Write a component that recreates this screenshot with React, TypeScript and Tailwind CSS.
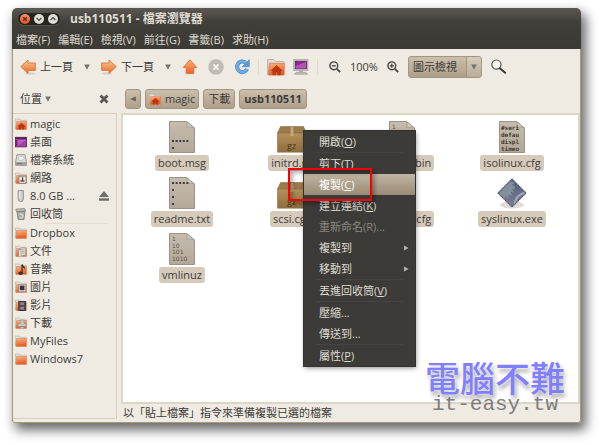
import React from "react"

type IconProps = { className?: string }

const CaretDown: React.FC = () => (
  <svg width="6" height="6" viewBox="0 0 6 6" aria-hidden="true">
    <path d="M0.2 0.5h5.6L3 5.8z" fill="#77736a" />
  </svg>
)

const CaretLeft: React.FC = () => (
  <svg width="6" height="6" viewBox="0 0 6 6" aria-hidden="true">
    <path d="M5.8 0.4v5.2L0.2 3z" fill="#6b6353" />
  </svg>
)

const BackIcon: React.FC = () => (
  <svg width="16" height="16" viewBox="0 0 16 16" aria-hidden="true">
    <defs>
      <linearGradient id="back" x1="0" y1="0" x2="0" y2="1">
        <stop offset="0" stopColor="#fbcb9c" />
        <stop offset="1" stopColor="#ea6a22" />
      </linearGradient>
    </defs>
    <ellipse cx="10" cy="14.4" rx="5" ry="1.2" fill="#d8d2c6" />
    <path d="M0.8 7.6 8 1v3h7.3v7.4H8v3z" fill="url(#back)" stroke="#d8703a" strokeWidth="0.9" strokeLinejoin="round" />
  </svg>
)

const ForwardIcon: React.FC = () => (
  <svg width="16" height="16" viewBox="0 0 16 16" aria-hidden="true">
    <ellipse cx="6" cy="14.4" rx="5" ry="1.2" fill="#d8d2c6" />
    <path d="M15.2 7.6 8 1v3H0.7v7.4H8v3z" fill="url(#back)" stroke="#d8703a" strokeWidth="0.9" strokeLinejoin="round" />
  </svg>
)

const UpIcon: React.FC = () => (
  <svg width="16" height="16" viewBox="0 0 16 16" aria-hidden="true">
    <defs>
      <linearGradient id="up" x1="0" y1="0" x2="0" y2="1">
        <stop offset="0" stopColor="#fbb57b" />
        <stop offset="1" stopColor="#ec5f20" />
      </linearGradient>
    </defs>
    <path d="M8 0.8 14.8 8.6h-3v6H4.2v-6h-3z" fill="url(#up)" stroke="#d8703a" strokeWidth="0.9" strokeLinejoin="round" />
  </svg>
)

const StopIcon: React.FC = () => (
  <svg width="16" height="16" viewBox="0 0 16 16" aria-hidden="true">
    <circle cx="8" cy="8" r="7.7" fill="#bfbcb6" />
    <path d="M5.4 5.4l5.2 5.2M10.6 5.4l-5.2 5.2" stroke="#f6f4f0" strokeWidth="1.8" />
  </svg>
)

const ReloadIcon: React.FC = () => (
  <svg width="16" height="16" viewBox="0 0 16 16" aria-hidden="true">
    <path d="M11.6 3.6A5.3 5.3 0 1 0 13.2 10" fill="none" stroke="#4f8cca" strokeWidth="4" />
    <path d="M11.6 3.6A5.3 5.3 0 1 0 13.2 10" fill="none" stroke="#70abe2" strokeWidth="2.6" />
    <path d="M15.3 0.6v7.2H8.2z" fill="#5b97d4" stroke="#4a86c6" strokeWidth="0.6" />
  </svg>
)

type FolderKind = "plain" | "home" | "network" | "documents" | "music" | "pictures" | "videos" | "downloads"

const emblems: Record<FolderKind, React.ReactNode> = {
  plain: null,
  home: (
    <path d="M6.4 5 2.8 8.3h1.1v2.9h1.8V9.4h1.5v1.8h1.8V8.3h1.100z" fill="#bb3611" stroke="#a83412" strokeWidth="0.4" />
  ),
  network: (
    <g>
      <rect x="4" y="4.2" width="7" height="7" fill="#ece9e4" stroke="#77736c" strokeWidth="0.7" />
      <path d="M7.5 5.3v3M5.5 9h4" stroke="#55524d" strokeWidth="1.4" />
    </g>
  ),
  documents: (
    <g fill="#e6e3dd" stroke="#8a867e" strokeWidth="0.6">
      <path d="M3.6 4.6h4v7.2h-4z" />
      <path d="M6 2.8h4.6v7.6H6z" />
      <path d="M7 4.8h2.6M7 6.4h2.6M7 8h2.6" />
    </g>
  ),
  music: (
    <g fill="#37352f">
      <path d="M6.4 1.4l1.3-.2c.2 2 3.5 2.6 2.3 5.8-.2-1.6-1-2.2-2.3-2.5v5.7H6.4z" />
      <ellipse cx="5.6" cy="10.2" rx="2.2" ry="1.7" />
    </g>
  ),
  pictures: (
    <g>
      <rect x="3.6" y="3.4" width="7" height="7.4" fill="#dcd9d4" stroke="#7e7a73" strokeWidth="0.5" />
      <rect x="4.8" y="4.6" width="4.6" height="4.6" fill="#3a3048" />
    </g>
  ),
  videos: (
    <g>
      <rect x="3.2" y="2" width="7.8" height="10" fill="#37312f" />
      <path d="M5.2 3.2h3.8v3H5.2zM5.2 7.4h3.8v3.4H5.2z" fill="#9d7ca4" />
      <path d="M4.2 2.6v9M10 2.6v9" stroke="#b9b3ad" strokeWidth="0.7" strokeDasharray="1 1" />
    </g>
  ),
  downloads: (
    <path d="M5.2 3h3.8v3.4h2.2v3.4H3V6.4h2.2zM3.6 9.6l3.5 2.8 3.5-2.8z" fill="#c9c6c0" stroke="#85817a" strokeWidth="0.5" />
  ),
}

const FolderIcon: React.FC<IconProps & { kind: FolderKind }> = ({ kind, className = "size-3" }) => (
  <svg className={`shrink-0 ${className}`} viewBox="0 0 12 12" aria-hidden="true">
    <defs>
      <linearGradient id="folder" x1="0" y1="0" x2="0.2" y2="1">
        <stop offset="0" stopColor="#f9b482" />
        <stop offset="1" stopColor="#e85a22" />
      </linearGradient>
    </defs>
    <path d="M0.4 11.200V1h4.200l1 1.300h5.700v2H2z" fill="#e2ded7" stroke="#b5afa5" strokeWidth="0.6" />
    <path d="M1.600 3.500h10l-.2 7.900H1z" fill="url(#folder)" stroke="#d57a50" strokeWidth="0.5" />
    {emblems[kind]}
  </svg>
)

const DesktopIcon: React.FC = () => (
  <svg className="size-3 shrink-0" viewBox="0 0 12 12" aria-hidden="true">
    <rect x="0.4" y="1.3" width="11.2" height="9.6" fill="#a63bab" stroke="#5a2454" strokeWidth="0.8" />
    <path d="M0.6 2.2h10.8" stroke="#3b2438" strokeWidth="1.3" />
    <path d="M1.4 4v6" stroke="#5f2361" strokeWidth="1.4" strokeDasharray="1.2 0.8" />
    <path d="M3 9.8V4h8z" fill="#cd6fce" opacity="0.6" />
  </svg>
)

const DriveIcon: React.FC = () => (
  <svg className="size-3 shrink-0" viewBox="0 0 12 12" aria-hidden="true">
    <path d="M2 0.6h8l1.4 7.2v3.6H0.6V7.8z" fill="#dedddb" stroke="#8b8985" strokeWidth="0.8" />
    <ellipse cx="6" cy="4.2" rx="3" ry="2.2" fill="#f4f3f2" stroke="#aaa8a5" strokeWidth="0.6" />
    <path d="M0.8 8h10.4v3.2H0.8z" fill="#a19f9b" />
    <path d="M2 9.6h5" stroke="#6a6865" strokeWidth="0.8" />
  </svg>
)

const UsbIcon: React.FC = () => (
  <svg className="size-3 shrink-0" viewBox="0 0 12 12" aria-hidden="true">
    <path d="M3.2 0.6h5.2v8.2q0 2.800-2.600 2.800T3.200 8.800z" fill="#cfcdca" stroke="#85837f" strokeWidth="0.8" />
    <path d="M4.8 1.6v7" stroke="#f3f2f0" strokeWidth="1.2" />
  </svg>
)

const TrashIcon: React.FC = () => (
  <svg className="size-3 shrink-0" viewBox="0 0 12 12" aria-hidden="true">
    <path d="M2 3.4h8l-1 8.1H3.2z" fill="#aaa9a5" stroke="#6e6c68" strokeWidth="0.7" />
    <path d="M0.8 1.2 9.6 0.6l1 2.2-9 .8z" fill="#c9c8c5" stroke="#6e6c68" strokeWidth="0.7" />
    <path d="M4.4 6.2h3l.8 2-1.4 1.8H4.6" fill="none" stroke="#f2f1ef" strokeWidth="0.9" />
  </svg>
)

const EjectIcon: React.FC = () => (
  <svg width="10" height="10" viewBox="0 0 10 10" aria-hidden="true">
    <path d="M5 0 10 6H0zM0 7.3h10v2.5H0z" fill="#716e68" />
  </svg>
)

const ComputerIcon: React.FC = () => (
  <svg width="16" height="16" viewBox="0 0 16 16" aria-hidden="true">
    <rect x="0.8" y="0.8" width="14" height="10.4" fill="#dcdad7" stroke="#98958f" strokeWidth="0.8" />
    <rect x="2.2" y="2.2" width="11.2" height="7.6" fill="#8e2a92" stroke="#4f1b52" strokeWidth="0.7" />
    <path d="M2.6 9.4V7l10.4-4v6.4z" fill="#c464c6" opacity="0.7" />
    <path d="M6 11.4h4v1.800H6z" fill="#b0ada8" />
    <path d="M3 13.400h10l1.500 1.800h-13z" fill="#c9c6c1" stroke="#8e8b85" strokeWidth="0.6" />
  </svg>
)

const ZoomIcon: React.FC<{ sign: "in" | "out" }> = ({ sign }) => (
  <svg width="12" height="12" viewBox="0 0 12 12" fill="none" stroke="#45433e" aria-hidden="true">
    <circle cx="4.8" cy="4.8" r="3.9" strokeWidth="1.4" />
    <path d="M2.8 4.8h4" strokeWidth="1.3" />
    {sign === "in" && <path d="M4.8 2.8v4" strokeWidth="1.3" />}
    <path d="M7.8 7.8l3.4 3.4" strokeWidth="1.8" />
  </svg>
)

const SearchIcon: React.FC = () => (
  <svg width="16" height="16" viewBox="0 0 16 16" fill="none" aria-hidden="true">
    <circle cx="5.4" cy="5.6" r="4.6" fill="#f6f4f0" stroke="#55534d" strokeWidth="1.2" />
    <path d="M8.8 9.200l5.400 4.600" stroke="#3a3935" strokeWidth="2" strokeLinecap="round" />
  </svg>
)

type FileKind = "text" | "dots" | "binary" | "config" | "package" | "exe"

const DocumentIcon: React.FC<{ children?: React.ReactNode }> = ({ children }) => (
  <svg width="26" height="32" viewBox="0 0 26 32" aria-hidden="true">
    <defs>
      <linearGradient id="paper" x1="0" y1="0" x2="0" y2="1">
        <stop offset="0" stopColor="#c6bcae" />
        <stop offset="1" stopColor="#b3a898" />
      </linearGradient>
    </defs>
    <path d="M0.5 0.5h17l8 6.600v24.400h-25z" fill="url(#paper)" stroke="#9b9285" />
    <path d="M17.500 0.500c1 2.400.8 4 .2 5.600 2.400-.4 5.400-.2 7.800 1z" fill="#d6cec3" stroke="#9b9285" strokeWidth="0.8" />
    {children}
  </svg>
)

const FileIcon: React.FC<{ kind: FileKind }> = ({ kind }) => {
  if (kind === "package") {
    return (
      <svg width="30" height="27" viewBox="0 0 30 27" aria-hidden="true">
        <defs>
          <linearGradient id="box" x1="0" y1="0" x2="0" y2="1">
            <stop offset="0" stopColor="#b59059" />
            <stop offset="1" stopColor="#8f6d3f" />
          </linearGradient>
        </defs>
        <path d="M3.500 0.500h23l3 6.500H0.500z" fill="#9c7a4a" stroke="#8b6d43" strokeWidth="0.6" />
        <path d="M0.500 7h29v19.200h-29z" fill="url(#box)" stroke="#8b6d43" strokeWidth="0.6" />
        <path d="M13.700 1h2.600l.2 9h-3z" fill="#c2a981" />
        <text x="10" y="23" fontSize="9" fontFamily="Open Sans, sans-serif" fill="#4a3619">
          gz
        </text>
      </svg>
    )
  }

  if (kind === "exe") {
    return (
      <svg width="32" height="32" viewBox="0 0 32 32" aria-hidden="true">
        <defs>
          <linearGradient id="gem" x1="0" y1="0" x2="0" y2="1">
            <stop offset="0" stopColor="#48597a" />
            <stop offset="1" stopColor="#85839a" />
          </linearGradient>
          <clipPath id="gem-edge">
            <path d="M16 2 30 16 16 30 2 16z" />
          </clipPath>
        </defs>
        <ellipse cx="16" cy="28" rx="12" ry="3.400" fill="#dddbd8" />
        <g clipPath="url(#gem-edge)">
          <path d="M0 0h32v32H0z" fill="url(#gem)" />
          <circle cx="7" cy="10" r="10" fill="#848f9b" />
          <circle cx="7" cy="10" r="10.600" fill="none" stroke="#848f9b" strokeWidth="2" strokeDasharray="2 1.600" />
          <circle cx="30" cy="27" r="11" fill="#77798f" stroke="#a3a9b8" strokeWidth="1.800" />
        </g>
        <path d="M16 2 30 16 16 30 2 16z" fill="none" stroke="#565a68" strokeWidth="1.200" strokeDasharray="1.500 0.500" />
      </svg>
    )
  }

  return (
    <DocumentIcon>
      {kind === "dots" && (
        <path d="M3 20h17M3 27h3" stroke="#3f3a45" strokeWidth="2" strokeDasharray="2 1.600" />
      )}
      {kind === "text" && (
        <path d="M3 6h17M3 13h3M3 20h3M3 27h3" stroke="#3f3a45" strokeWidth="2" strokeDasharray="2 1.600" />
      )}
      {kind === "binary" && (
        <g fontSize="6" fontFamily="DejaVu Sans, sans-serif" fill="#5d564c">
          <text x="3" y="8">1</text>
          <text x="3" y="15">10</text>
          <text x="3" y="21">101</text>
          <text x="3" y="28">1010</text>
        </g>
      )}
      {kind === "config" && (
        <g fontSize="6" fontWeight="700" fontFamily="DejaVu Sans Mono, monospace" fill="#3f3a33">
          <text x="2" y="9">#seri</text>
          <text x="2" y="16">defau</text>
          <text x="2" y="23">displ</text>
          <text x="2" y="30">timeo</text>
        </g>
      )}
    </DocumentIcon>
  )
}

const menus = ["檔案(F)", "編輯(E)", "檢視(V)", "前往(G)", "書籤(B)", "求助(H)"]

const devices = [
  { name: "magic", icon: <FolderIcon kind="home" /> },
  { name: "桌面", icon: <DesktopIcon /> },
  { name: "檔案系統", icon: <DriveIcon /> },
  { name: "網路", icon: <FolderIcon kind="network" /> },
  { name: "8.0 GB ...", icon: <UsbIcon />, ejectable: true },
  { name: "回收筒", icon: <TrashIcon /> },
]

const bookmarks: { name: string; kind: FolderKind }[] = [
  { name: "Dropbox", kind: "plain" },
  { name: "文件", kind: "documents" },
  { name: "音樂", kind: "music" },
  { name: "圖片", kind: "pictures" },
  { name: "影片", kind: "videos" },
  { name: "下載", kind: "downloads" },
  { name: "MyFiles", kind: "plain" },
  { name: "Windows7", kind: "plain" },
]

const files: { name: string; kind: FileKind }[] = [
  { name: "boot.msg", kind: "dots" },
  { name: "initrd.gz", kind: "package" },
  { name: "isolinux.bin", kind: "binary" },
  { name: "isolinux.cfg", kind: "config" },
  { name: "readme.txt", kind: "text" },
  { name: "scsi.cgz", kind: "package" },
  { name: "syslinux.cfg", kind: "config" },
  { name: "syslinux.exe", kind: "exe" },
  { name: "vmlinuz", kind: "binary" },
]

type Action = {
  label: string
  accel?: string
  tail?: string
  submenu?: boolean
  disabled?: boolean
  active?: boolean
  divided?: boolean
}

const actions: Action[] = [
  { label: "開啟", accel: "O" },
  { label: "剪下", accel: "T", divided: true },
  { label: "複製", accel: "C", active: true },
  { label: "建立連結", accel: "K" },
  { label: "重新命名", accel: "R", tail: "...", disabled: true },
  { label: "複製到", submenu: true },
  { label: "移動到", submenu: true },
  { label: "丟進回收筒", accel: "V", divided: true },
  { label: "壓縮", tail: "...", divided: true },
  { label: "傳送到", tail: "..." },
  { label: "屬性", accel: "P", divided: true },
]

const crumb =
  "flex h-5 items-center gap-1 rounded-[3px] border border-[#a39681] bg-gradient-to-b from-[#cbbfae] to-[#ad9f8a]"

const TitleBar: React.FC = () => (
  <header className="rounded-t-[5px] bg-gradient-to-b from-[#5b5952] via-[#403e39] via-35% to-[#3b3a35] text-[#dfdbd2]">
    <div className="flex h-[22px] items-center gap-2.5 pl-[6px]">
      <div className="flex h-3 items-center gap-1 rounded-full bg-[#25241f] px-0.5 shadow-[0_1px_0_#55534c]">
        <button aria-label="關閉" className="size-2.5 rounded-full bg-gradient-to-b from-[#f5926a] to-[#df5020]">
          <svg viewBox="0 0 10 10" className="size-2.5">
            <path d="M3.200 3.200l3.600 3.600M6.800 3.200L3.200 6.800" stroke="#6b2510" strokeWidth="1.300" />
          </svg>
        </button>
        <button aria-label="最小化" className="size-2.5 rounded-full bg-[#dfdcd6]">
          <svg viewBox="0 0 10 10" className="size-2.5">
            <path d="M2.600 4l2.400 2.400L7.400 4" fill="none" stroke="#4c4a44" strokeWidth="1.200" />
          </svg>
        </button>
        <button aria-label="最大化" className="size-2.5 rounded-full bg-[#dfdcd6]">
          <svg viewBox="0 0 10 10" className="size-2.5">
            <path d="M2.600 6l2.400-2.400L7.400 6" fill="none" stroke="#4c4a44" strokeWidth="1.200" />
          </svg>
        </button>
      </div>
      <h1 className="text-xs font-bold">usb110511 - 檔案瀏覽器</h1>
    </div>
    <nav className="flex h-[19px] items-center gap-2 pl-1">
      {menus.map((menu) => (
        <button key={menu} className="leading-4">
          {menu}
        </button>
      ))}
    </nav>
  </header>
)

const Toolbar: React.FC = () => (
  <div className="flex h-9 shrink-0 items-center pl-[7px]">
    <button className="flex items-center gap-1">
      <BackIcon />
      上一頁
    </button>
    <button aria-label="上一頁紀錄" className="mx-[11px]">
      <CaretDown />
    </button>
    <button className="flex items-center gap-1">
      <ForwardIcon />
      下一頁
    </button>
    <button aria-label="下一頁紀錄" className="mx-[11px]">
      <CaretDown />
    </button>
    <div className="flex gap-2.5">
      <button aria-label="上層">
        <UpIcon />
      </button>
      <button aria-label="停止" disabled>
        <StopIcon />
      </button>
      <button aria-label="重新載入">
        <ReloadIcon />
      </button>
    </div>
    <div className="ml-2 flex h-4 items-center gap-2 border-x border-[#e0dbd0] px-2">
      <button aria-label="家目錄">
        <FolderIcon kind="home" className="size-[18px]" />
      </button>
      <button aria-label="電腦">
        <ComputerIcon />
      </button>
    </div>
    <div className="ml-[11px] flex items-center gap-[9px]">
      <button aria-label="縮小">
        <ZoomIcon sign="out" />
      </button>
      <span>100%</span>
      <button aria-label="放大">
        <ZoomIcon sign="in" />
      </button>
      <div className="relative">
        <select
          aria-label="檢視模式"
          className="h-[22px] w-[74px] appearance-none rounded-[3px] border border-[#a39681] bg-gradient-to-b from-[#cbbfae] to-[#ad9f8a] pl-1"
        >
          <option>圖示檢視</option>
          <option>清單檢視</option>
        </select>
        <span className="pointer-events-none absolute inset-y-px right-px flex w-[15px] items-center justify-center rounded-r-[2px] border-l border-[#a39681] bg-gradient-to-b from-[#d5cbbc] to-[#b9ac98]">
          <CaretDown />
        </span>
      </div>
      <button aria-label="搜尋">
        <SearchIcon />
      </button>
    </div>
  </div>
)

const Sidebar: React.FC = () => (
  <aside className="flex w-[104px] shrink-0 flex-col pb-[3px]">
    <div className="flex h-7 items-center justify-between pr-2 pl-[7px]">
      <button className="flex items-center gap-[3px]">
        位置
        <CaretDown />
      </button>
      <button aria-label="關閉側邊欄">
        <svg width="10" height="10" viewBox="0 0 10 10">
          <path d="M1.500 1.500l7 7M8.500 1.500l-7 7" stroke="#5c5952" strokeWidth="2.800" />
        </svg>
      </button>
    </div>
    <div className="flex-1 border border-l-0 border-[#d8ceb9] pt-px">
      <ul>
        {devices.map(({ name, icon, ejectable }) => (
          <li key={name} className="flex h-[18px] items-center justify-between pr-[7px] pl-0.5">
            <a href="#" className="flex items-center gap-[3px]">
              {icon}
              {name}
            </a>
            {ejectable && (
              <button aria-label="退出">
                <EjectIcon />
              </button>
            )}
          </li>
        ))}
      </ul>
      <hr className="mr-2 ml-8 border-[#e2dccf]" />
      <ul>
        {bookmarks.map(({ name, kind }) => (
          <li key={name} className="flex h-[18px] items-center pl-0.5">
            <a href="#" className="flex items-center gap-[3px]">
              <FolderIcon kind={kind} />
              {name}
            </a>
          </li>
        ))}
      </ul>
    </div>
  </aside>
)

const ContextMenu: React.FC = () => (
  <div
    role="menu"
    className="absolute top-[131px] left-[304px] w-[111px] bg-[#3c3b37] text-[#dfdbd2] shadow-[1px_2px_5px_rgba(0,0,0,0.45)] ring-1 ring-[#33322e]"
  >
    {actions.map(({ label, accel, tail, submenu, disabled, active, divided }) => (
      <React.Fragment key={label}>
        {divided && <hr className="mx-3 border-[#454440]" />}
        <button
          role="menuitem"
          disabled={disabled}
          className={`flex h-[21px] w-full items-center justify-between pr-1.5 pl-[15px] disabled:text-[#8b8880] ${
            active ? "bg-gradient-to-b from-[#c2b5a3] to-[#998b75] text-white" : ""
          }`}
        >
          <span>
            {label}
            {accel && (disabled ? `(${accel})` : <>(<u>{accel}</u>)</>)}
            {tail}
          </span>
          {submenu && (
            <svg width="5" height="6" viewBox="0 0 5 6" aria-hidden="true">
              <path d="M0 0.500v5L4.600 3z" fill="#b5b1a7" />
            </svg>
          )}
        </button>
      </React.Fragment>
    ))}
  </div>
)

const App: React.FC = () => {
  return (
    <div className="relative flex min-h-screen flex-col bg-white pt-2 pr-[19px] pb-[22px] pl-3 font-['Open_Sans','Noto_Sans_CJK_TC',sans-serif] text-[11px] leading-4 text-[#3c3b37]">
      <main className="flex flex-1 flex-col rounded-t-[5px] rounded-b-[3px] bg-[#efebe3] shadow-[4px_6px_12px_1px_rgba(0,0,0,0.6)]">
        <TitleBar />
        <div className="flex flex-1 flex-col rounded-b-[3px] border-x border-b border-[#a69878]">
          <Toolbar />
          <div className="flex flex-1 gap-1">
            <Sidebar />
            <section className="flex min-w-0 flex-1 flex-col">
              <nav className="flex h-7 items-center gap-1 pl-1">
                <button aria-label="往左捲動" className={`${crumb} w-4 justify-center`}>
                  <CaretLeft />
                </button>
                <button className={`${crumb} px-[3px]`}>
                  <FolderIcon kind="home" />
                  magic
                </button>
                <button className={`${crumb} px-1`}>下載</button>
                <button className={`${crumb} px-1 font-bold`}>usb110511</button>
              </nav>
              <div className="flex-1 border-2 border-[#ddd5c5] bg-white">
                <ul className="grid grid-cols-[repeat(auto-fill,110px)] pt-1.5 pl-1">
                  {files.map(({ name, kind }) => (
                    <li key={name} className="flex h-14 flex-col items-center gap-0.5">
                      <div className="flex h-8 items-end">
                        <FileIcon kind={kind} />
                      </div>
                      <span className="rounded-[3px] bg-[#d6cbbb] px-[3px]">{name}</span>
                    </li>
                  ))}
                </ul>
              </div>
              <footer className="flex h-[18px] items-center pl-0.5">以「貼上檔案」指令來準備複製已選的檔案</footer>
            </section>
          </div>
        </div>
      </main>

      <ContextMenu />

      {/* highlight around the copy action */}
      <div className="pointer-events-none absolute top-[168px] left-[288px] h-[33px] w-[84px] border-2 border-[#f80000] shadow-[3px_3px_4px_rgba(0,0,0,0.3),inset_3px_3px_4px_rgba(0,0,0,0.3)]" />

      <div className="pointer-events-none absolute right-[35px] bottom-8 text-center">
        <p className="text-[35px] leading-9 font-medium text-[#8080ff] [text-shadow:0_0_2px_#fff,2px_4px_4px_rgba(0,0,0,0.35)]">
          電腦不難
        </p>
        <p className="font-['Liberation_Mono',monospace] text-[21px] leading-4 text-[#7d7d7d]">it-easy.tw</p>
      </div>
    </div>
  )
}

export default App
